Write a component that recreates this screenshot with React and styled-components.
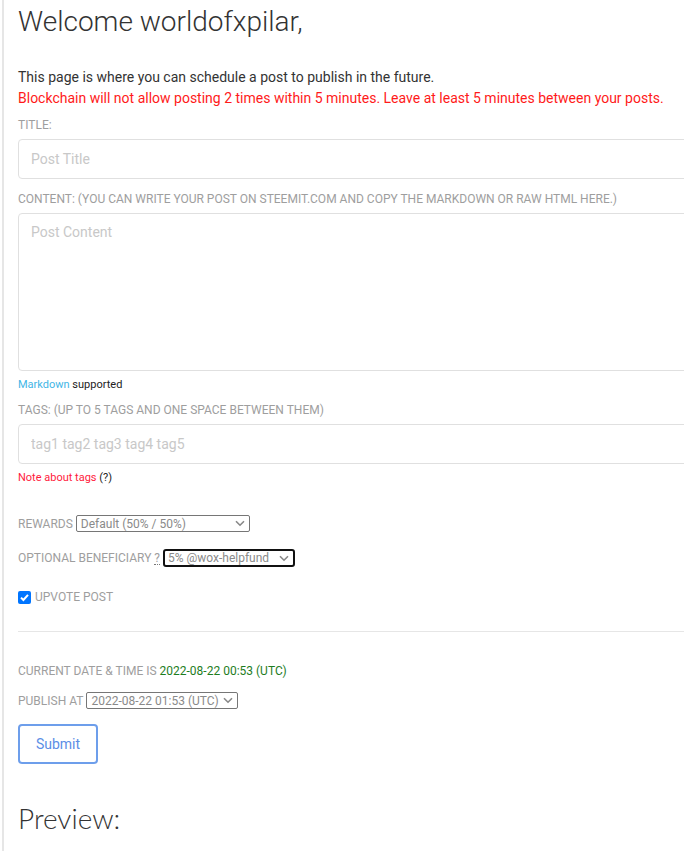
import React from "react";
import styled, { createGlobalStyle } from "styled-components";

const GlobalStyle = createGlobalStyle`
  html, body {
    margin: 0;
    padding: 0;
    background: #fff;
  }
  body {
    font-family: Roboto, "Liberation Sans", sans-serif;
    color: #333;
    overflow: hidden;
  }
`;

const Page = styled.div`
  margin-left: 2px;
  border-left: 2px solid #e6e6e6;
  padding: 0 0 40px 14px;
  min-height: 851px;
  box-sizing: border-box;
  overflow: hidden;
`;

const Welcome = styled.h1`
  margin: 0;
  padding-top: 4px;
  font-weight: 300;
  font-size: 28px;
  line-height: 36px;
  color: #333;
`;

const Intro = styled.p`
  margin: 27px 0 0;
  font-size: 14px;
  line-height: 21px;
  color: ${(p) => (p.$warn ? "#ff1a1a" : "#333")};
  & + & {
    margin-top: 0;
  }
`;

const Field = styled.div`
  margin-top: ${(p) => p.$top || 10}px;
`;

const Label = styled.label`
  display: block;
  font-size: 12px;
  line-height: 16px;
  color: #9e9e9e;
  text-transform: uppercase;
  margin-bottom: 6px;
`;

const TextInput = styled.input`
  display: block;
  width: 700px;
  height: 40px;
  box-sizing: border-box;
  border: 1px solid #e0e0e0;
  border-radius: 4px;
  padding: 0 12px;
  font-family: Roboto, "Liberation Sans", sans-serif;
  font-size: 14px;
  color: #333;
  outline: none;
  &::placeholder {
    color: #c8c8c8;
  }
`;

const TextArea = styled.textarea`
  display: block;
  width: 700px;
  height: 158px;
  box-sizing: border-box;
  border: 1px solid #e0e0e0;
  border-radius: 4px;
  padding: 10px 12px;
  font-family: Roboto, "Liberation Sans", sans-serif;
  font-size: 14px;
  resize: none;
  outline: none;
  &::placeholder {
    color: #c8c8c8;
  }
`;

const Small = styled.div`
  font-size: 11px;
  line-height: 14px;
  margin-top: ${(p) => p.$top || 6}px;
  color: #222;
`;

const LinkText = styled.span`
  color: ${(p) => p.$color};
`;

const Inline = styled.div`
  display: flex;
  align-items: center;
  gap: 3px;
  margin-top: ${(p) => p.$top}px;
  font-size: 12px;
  color: #9e9e9e;
  text-transform: uppercase;
`;

const Abbr = styled.span`
  border-bottom: 1px dotted #777;
  line-height: 12px;
`;

const Select = styled.div`
  display: flex;
  align-items: center;
  justify-content: space-between;
  box-sizing: border-box;
  width: ${(p) => p.$w}px;
  height: ${(p) => (p.$focus ? 18 : 17)}px;
  border: ${(p) => (p.$focus ? "2px solid #111" : "1px solid #767676")};
  border-radius: ${(p) => (p.$focus ? 3 : 2)}px;
  padding: 0 4px 0 ${(p) => (p.$focus ? 3 : 4)}px;
  font-size: 12px;
  color: #8a8a8a;
  text-transform: none;
  white-space: nowrap;
`;

const Chevron = () => (
  <svg width="10" height="7" viewBox="0 0 10 7">
    <path d="M1 1.2 L5 5.2 L9 1.2" fill="none" stroke="#888" strokeWidth="1.6" />
  </svg>
);

const Check = styled.span`
  display: inline-flex;
  align-items: center;
  justify-content: center;
  width: 13px;
  height: 13px;
  border-radius: 2px;
  background: #0075ff;
  margin-right: 1px;
`;

const Rule = styled.hr`
  border: 0;
  border-top: 1px solid #e6e6e6;
  margin: 27px -20px 0 0;
`;

const Green = styled.span`
  color: #1e7d1e;
`;

const Submit = styled.button`
  margin-top: 15px;
  width: 80px;
  height: 40px;
  border: 2px solid #6d9eeb;
  border-radius: 4px;
  background: #fff;
  color: #5b8ee6;
  font-family: Roboto, "Liberation Sans", sans-serif;
  font-size: 14px;
`;

const Preview = styled.h2`
  margin: 37px 0 0;
  font-family: Lato, Roboto, sans-serif;
  font-weight: 300;
  font-size: 28px;
  line-height: 34px;
  color: #333;
`;

export default function App() {
  return (
    <>
      <GlobalStyle />
      <Page>
        <Welcome>Welcome worldofxpilar,</Welcome>
        <Intro>This page is where you can schedule a post to publish in the future.</Intro>
        <Intro $warn>
          Blockchain will not allow posting 2 times within 5 minutes. Leave at least 5 minutes
          between your posts.
        </Intro>

        <Field $top={8}>
          <Label>Title:</Label>
          <TextInput placeholder="Post Title" />
        </Field>

        <Field $top={12}>
          <Label>
            Content: (You can write your post on steemit.com and copy the markdown or raw html here.)
          </Label>
          <TextArea placeholder="Post Content" />
          <Small $top={7}>
            <LinkText $color="#3fb6e6">Markdown</LinkText> supported
          </Small>
        </Field>

        <Field $top={10}>
          <Label>Tags: (up to 5 tags and one space between them)</Label>
          <TextInput placeholder="tag1 tag2 tag3 tag4 tag5" />
          <Small $top={7}>
            <LinkText $color="#ff1a3c">Note about tags</LinkText> (?)
          </Small>
        </Field>

        <Inline $top={30}>
          Rewards
          <Select $w={174}>
            Default (50% / 50%)
            <Chevron />
          </Select>
        </Inline>

        <Inline $top={17}>
          Optional Beneficiary <Abbr>?</Abbr>
          <Select $w={132} $focus>
            5% @wox-helpfund
            <Chevron />
          </Select>
        </Inline>

        <Inline $top={23}>
          <Check>
            <svg width="11" height="11" viewBox="0 0 11 11">
              <path d="M2 5.6 L4.4 8 L9 2.8" fill="none" stroke="#fff" strokeWidth="2" />
            </svg>
          </Check>
          Upvote post
        </Inline>

        <Rule />

        <Inline $top={32}>
          Current date &amp; time is <Green>2022-08-22 00:53 (UTC)</Green>
        </Inline>

        <Inline $top={14}>
          Publish at
          <Select $w={152}>
            2022-08-22 01:53 (UTC)
            <Chevron />
          </Select>
        </Inline>

        <Submit>Submit</Submit>

        <Preview>Preview:</Preview>
      </Page>
    </>
  );
}
